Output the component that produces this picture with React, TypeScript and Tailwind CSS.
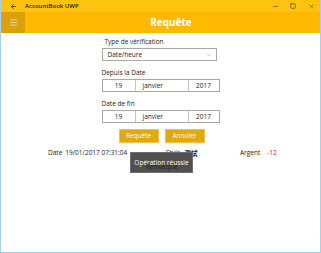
import React from 'react';
import { ArrowLeft, Menu, Minus, Square, X, ChevronDown } from 'lucide-react';

const font = { fontFamily: '"Open Sans", "Noto Sans", "Noto Sans CJK SC", sans-serif' };

const DatePicker = ({ day, month, year }: { day: string; month: string; year: string }) => (
  <div className="flex h-[13px] w-[118px] border border-[#a8a8a8] text-[6.5px] text-[#222]">
    <div className="flex w-[33px] items-center justify-center border-r border-[#c8c8c8]">{day}</div>
    <div className="flex w-[53px] items-center border-r border-[#c8c8c8] pl-[7px]">{month}</div>
    <div className="flex flex-1 items-center justify-center">{year}</div>
  </div>
);

const App = () => {
  return (
    <div
      className="relative flex h-[253px] w-[321px] flex-col overflow-hidden border-x border-b border-[#a9d0ea] bg-white"
      style={font}
    >
      {/* title bar */}
      <div className="flex h-[12px] items-center bg-[#ffc20f] text-[#222]">
        <div className="flex w-[24px] justify-center">
          <ArrowLeft className="h-[7px] w-[7px]" strokeWidth={2.5} />
        </div>
        <span className="text-[6px] font-semibold">AccountBook UWP</span>
        <div className="ml-auto flex items-center">
          <div className="flex w-[18px] justify-center"><Minus className="h-[7px] w-[7px]" strokeWidth={1.5} /></div>
          <div className="flex w-[18px] justify-center"><Square className="h-[6px] w-[6px]" strokeWidth={2} /></div>
          <div className="flex w-[18px] justify-center"><X className="h-[7px] w-[7px]" strokeWidth={1.5} /></div>
        </div>
      </div>

      {/* header */}
      <div className="flex h-[21px] items-center bg-[#ffb900]">
        <div className="flex h-full w-[24px] items-center justify-center bg-[#d9a20a]">
          <Menu className="h-[9px] w-[9px] text-white" strokeWidth={1.5} />
        </div>
        <div className="flex-1 pr-[3px] text-center text-[10px] font-bold text-white">Requête</div>
      </div>

      {/* form */}
      <div className="mx-auto mt-[3px] flex w-[118px] flex-col text-[6.5px] text-[#222]">
        <div className="pl-[3px] leading-[12px]">Type de vérification</div>
        <div className="flex h-[13px] w-[115px] items-center justify-between border border-[#a8a8a8] pl-[5px] pr-[4px]">
          <span>Date/heure</span>
          <ChevronDown className="h-[6px] w-[6px] text-[#777]" strokeWidth={1.5} />
        </div>
        <div className="mt-[6px] leading-[12px]">Depuis la Date</div>
        <DatePicker day="19" month="janvier" year="2017" />
        <div className="mt-[6px] leading-[12px]">Date de fin</div>
        <DatePicker day="19" month="janvier" year="2017" />
        <div className="mt-[6px] flex justify-center gap-[6px] pl-[2px]">
          <button className="h-[14px] w-[40px] border border-[#f0c24a] bg-[#e0a90d] text-[6.5px] text-white">Requête</button>
          <button className="h-[14px] w-[40px] border border-[#f0c24a] bg-[#e0a90d] text-[6.5px] text-white">Annuler</button>
        </div>
      </div>

      {/* results */}
      <div className="mt-[5px] flex pl-[47px] text-[6.5px] leading-[10px] text-[#222]">
        <div className="flex w-[118px] gap-[3px]">
          <span>Date</span>
          <span>19/01/2017 07:31:04</span>
        </div>
        <div className="flex w-[74px] gap-[4px]">
          <span>Style</span>
          <span className="font-bold" style={{ fontFamily: '"Noto Sans CJK SC", sans-serif' }}>測試</span>
        </div>
        <div className="flex gap-[7px]">
          <span>Argent</span>
          <span className="text-[#e81123]">-12</span>
        </div>
      </div>

      {/* toast */}
      <div className="absolute left-[129px] top-[152px] flex h-[21px] w-[63px] items-start justify-center border border-[#6e6e6e] bg-[#505050] pt-[5px] text-[6.5px] text-white">
        Opération réussie
      </div>
      <div className="relative z-10 mt-[5px] pl-[145px] text-[6.5px] leading-[8px] text-[#222]">Remarque</div>
    </div>
  );
};

export default App;
